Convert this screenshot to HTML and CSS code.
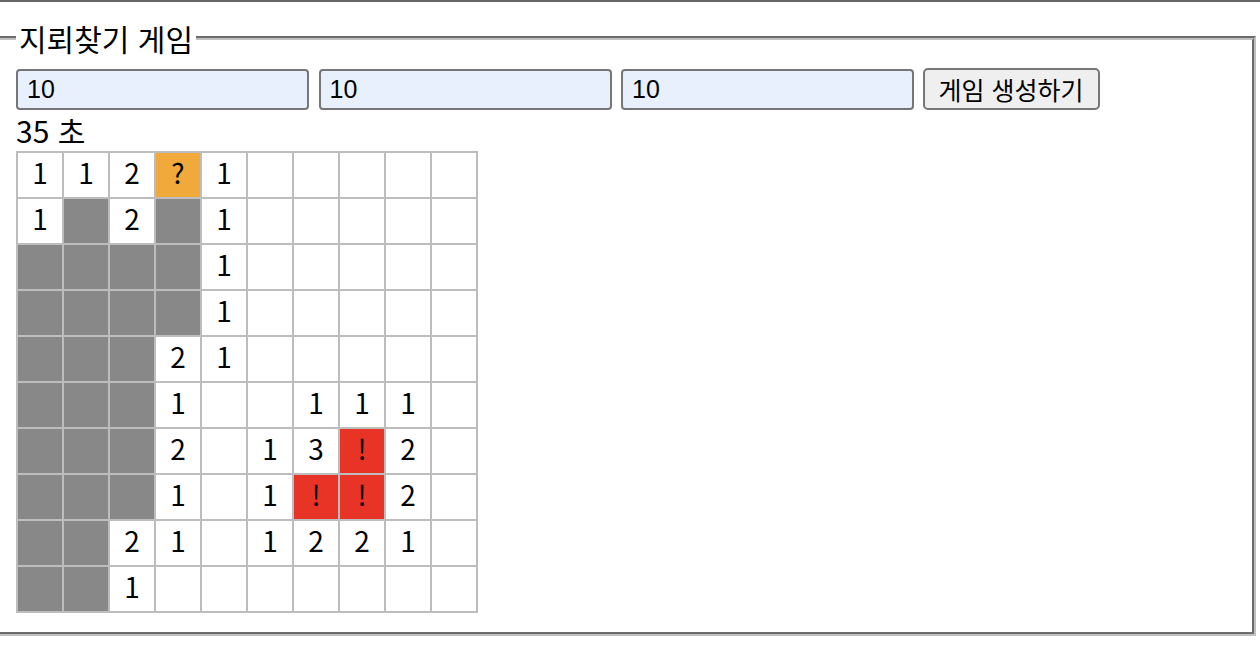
FILE: index.html
```html
<!DOCTYPE html>
<html lang="ko">
<head>
<meta charset="utf-8">
<title>지뢰찾기 게임</title>
<link rel="stylesheet" href="styles.css">
</head>
<body>
<div class="topbar"></div>
<fieldset class="game">
  <legend>지뢰찾기 게임</legend>
  <div class="controls">
    <input class="field" type="text" value="10">
    <input class="field" type="text" value="10">
    <input class="field" type="text" value="10">
    <button class="create" type="button">게임 생성하기</button>
  </div>
  <div class="timer">35 초</div>
  <table class="board">
    <tr><td>1</td><td>1</td><td>2</td><td class="q">?</td><td>1</td><td></td><td></td><td></td><td></td><td></td></tr>
    <tr><td>1</td><td class="c"></td><td>2</td><td class="c"></td><td>1</td><td></td><td></td><td></td><td></td><td></td></tr>
    <tr><td class="c"></td><td class="c"></td><td class="c"></td><td class="c"></td><td>1</td><td></td><td></td><td></td><td></td><td></td></tr>
    <tr><td class="c"></td><td class="c"></td><td class="c"></td><td class="c"></td><td>1</td><td></td><td></td><td></td><td></td><td></td></tr>
    <tr><td class="c"></td><td class="c"></td><td class="c"></td><td>2</td><td>1</td><td></td><td></td><td></td><td></td><td></td></tr>
    <tr><td class="c"></td><td class="c"></td><td class="c"></td><td>1</td><td></td><td></td><td>1</td><td>1</td><td>1</td><td></td></tr>
    <tr><td class="c"></td><td class="c"></td><td class="c"></td><td>2</td><td></td><td>1</td><td>3</td><td class="f">!</td><td>2</td><td></td></tr>
    <tr><td class="c"></td><td class="c"></td><td class="c"></td><td>1</td><td></td><td>1</td><td class="f">!</td><td class="f">!</td><td>2</td><td></td></tr>
    <tr><td class="c"></td><td class="c"></td><td>2</td><td>1</td><td></td><td>1</td><td>2</td><td>2</td><td>1</td><td></td></tr>
    <tr><td class="c"></td><td class="c"></td><td>1</td><td></td><td></td><td></td><td></td><td></td><td></td><td></td></tr>
  </table>
</fieldset>
</body>
</html>
```
FILE: styles.css
```css
html, body {
  margin: 0;
  padding: 0;
  background: #ffffff;
}
body {
  font-family: "Noto Sans CJK KR", "Noto Sans", sans-serif;
  font-size: 30px;
  color: #000;
  overflow: hidden;
}
.topbar {
  height: 2px;
  background: #666666;
}
.game {
  margin: 16px 4px 0 -8px;
  border: 4px groove #c0c0c0;
  padding: 10px 20px 19px 20px;
  min-width: 0;
}
.game legend {
  padding: 0 3px;
  font-size: 30px;
  line-height: 40px;
}
.controls {
  display: flex;
  gap: 9.5px;
  align-items: center;
}
.field {
  box-sizing: border-box;
  width: 293px;
  height: 41px;
  margin: 0;
  border: 2px solid #767676;
  border-radius: 4px;
  background: #e8f0fe;
  padding: 0 9px;
  font-family: "Liberation Sans", Arial, sans-serif;
  font-size: 25px;
  color: #000;
}
.create {
  box-sizing: border-box;
  height: 42px;
  width: 177px;
  margin: 0 0 0 -1px;
  border: 2px solid #767676;
  border-radius: 5px;
  background: #efefef;
  padding: 0 6px;
  font-family: "Noto Sans CJK KR", sans-serif;
  font-size: 25px;
  color: #000;
}
.timer {
  line-height: 41px;
}
.board {
  border-collapse: collapse;
}
.board td {
  box-sizing: border-box;
  width: 46px;
  height: 46px;
  padding: 0 0 6px 0;
  border: 2px solid #bdbdbd;
  text-align: center;
  vertical-align: middle;
  font-size: 28px;
  line-height: 36px;
  background: #ffffff;
}
.board td.c {
  background: #888888;
}
.board td.q {
  background: #f1a93b;
}
.board td.f {
  background: #e83426;
}
```
